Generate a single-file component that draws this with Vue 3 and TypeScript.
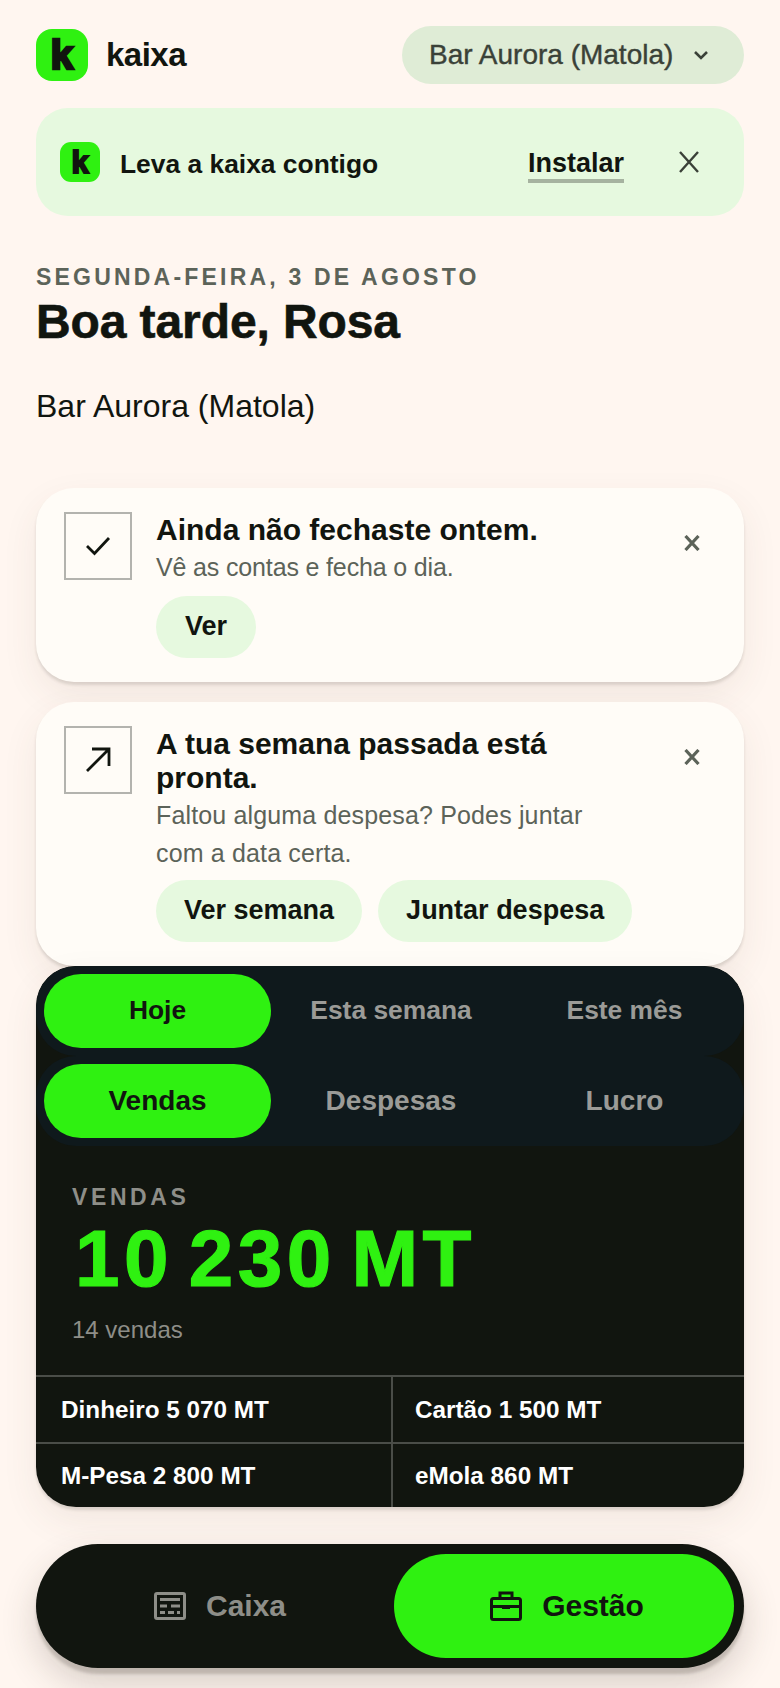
<script setup lang="ts">
interface Notice {
  icon: "check" | "arrow";
  title: string;
  text: string;
  actions: string[];
}

const notices: Notice[] = [
  {
    icon: "check",
    title: "Ainda não fechaste ontem.",
    text: "Vê as contas e fecha o dia.",
    actions: ["Ver"],
  },
  {
    icon: "arrow",
    title: "A tua semana passada está pronta.",
    text: "Faltou alguma despesa? Podes juntar com a data certa.",
    actions: ["Ver semana", "Juntar despesa"],
  },
];

const periods = ["Hoje", "Esta semana", "Este mês"];
const metrics = ["Vendas", "Despesas", "Lucro"];
const methods = ["Dinheiro 5 070 MT", "Cartão 1 500 MT", "M-Pesa 2 800 MT", "eMola 860 MT"];
</script>

<template>
  <div class="page">
    <header class="top">
      <div class="brand">
        <span class="logo">k</span>
        <span class="name">kaixa</span>
      </div>
      <button class="venue">
        Bar Aurora (Matola)
        <svg width="16" height="10" viewBox="0 0 16 10" fill="none">
          <path d="M2 2l6 6 6-6" stroke="#3a4138" stroke-width="2.6" />
        </svg>
      </button>
    </header>

    <section class="install">
      <span class="logo small">k</span>
      <strong class="install-text">Leva a kaixa contigo</strong>
      <a class="install-link">Instalar</a>
      <svg class="install-close" width="20" height="22" viewBox="0 0 20 22" fill="none">
        <path d="M1 1l18 20M19 1L1 21" stroke="#3a4138" stroke-width="2.4" />
      </svg>
    </section>

    <section class="greeting">
      <p class="date">SEGUNDA-FEIRA, 3 DE AGOSTO</p>
      <h1>Boa tarde, Rosa</h1>
      <p class="place">Bar Aurora (Matola)</p>
    </section>

    <article v-for="n in notices" :key="n.title" class="notice">
      <div class="notice-icon">
        <svg v-if="n.icon === 'check'" width="26" height="20" viewBox="0 0 26 20" fill="none">
          <path d="M2 10l7.5 7.5L24 2" stroke="#11150f" stroke-width="2.8" />
        </svg>
        <svg v-else width="26" height="26" viewBox="0 0 26 26" fill="none">
          <path d="M2 24L24 2M7 2h17v17" stroke="#11150f" stroke-width="2.8" />
        </svg>
      </div>
      <div class="notice-body">
        <h2>{{ n.title }}</h2>
        <p>{{ n.text }}</p>
        <div class="notice-actions" :class="{ single: n.actions.length === 1 }">
          <button v-for="a in n.actions" :key="a">{{ a }}</button>
        </div>
      </div>
      <svg class="notice-close" width="16" height="16" viewBox="0 0 16 16" fill="none">
        <path d="M1.5 1l13 14M14.5 1L1.5 15" stroke="#5c6359" stroke-width="3.2" />
      </svg>
    </article>

    <section class="panel">
      <div class="tabs">
        <span v-for="(p, i) in periods" :key="p" class="tab" :class="{ on: i === 0 }">{{ p }}</span>
      </div>
      <div class="tabs big">
        <span v-for="(m, i) in metrics" :key="m" class="tab" :class="{ on: i === 0 }">{{ m }}</span>
      </div>
      <div class="total">
        <p class="total-label">VENDAS</p>
        <p class="total-value">10 230 MT</p>
        <p class="total-count">14 vendas</p>
      </div>
      <div class="methods">
        <div v-for="m in methods" :key="m" class="method">{{ m }}</div>
      </div>
    </section>

    <nav class="nav">
      <a class="nav-item">
        <svg width="32" height="28" viewBox="0 0 32 28" fill="none">
          <rect x="1.5" y="1.5" width="29" height="25" rx="1.5" stroke="currentColor" stroke-width="3" />
          <path d="M6 7.5h20M6 14h7M17 14h9M6 20.5h5M14 20.5h6M23 20.5h3" stroke="currentColor" stroke-width="3" />
        </svg>
        Caixa
      </a>
      <a class="nav-item active">
        <svg width="32" height="30" viewBox="0 0 32 30" fill="none">
          <path d="M10 7V2h12v5" stroke="currentColor" stroke-width="3" />
          <rect x="1.5" y="7.5" width="29" height="21" rx="2" stroke="currentColor" stroke-width="3" />
          <path d="M2 15.5h28" stroke="currentColor" stroke-width="3" />
          <path d="M12 15h8v3h-8z" fill="currentColor" />
        </svg>
        Gestão
      </a>
    </nav>
  </div>
</template>

<style>
html,
body {
  background: #fff6f0;
}
</style>

<style scoped>
.page {
  width: 780px;
  height: 1688px;
  box-sizing: border-box;
  padding: 26px 36px 0;
  overflow: hidden;
  font-family: "Liberation Sans", Arial, sans-serif;
  color: #11150f;
  background: #fff6f0;
}
p,
h1,
h2 {
  margin: 0;
}
button {
  border: 0;
  font: inherit;
  color: inherit;
}
.top {
  display: flex;
  align-items: center;
  justify-content: space-between;
  height: 58px;
}
.brand {
  display: flex;
  align-items: center;
  gap: 18px;
}
.logo {
  display: flex;
  align-items: center;
  justify-content: center;
  width: 52px;
  height: 52px;
  border-radius: 16px;
  background: #2ff111;
  font-size: 41px;
  font-weight: 700;
  line-height: 1;
  -webkit-text-stroke: 2.6px #11150f;
}
.logo.small {
  width: 40px;
  height: 40px;
  border-radius: 11px;
  font-size: 31px;
  -webkit-text-stroke: 2px #11150f;
}
.name {
  font-size: 33px;
  font-weight: 700;
  letter-spacing: -0.5px;
}
.venue {
  display: flex;
  align-items: center;
  gap: 20px;
  width: 342px;
  height: 58px;
  padding: 0 0 0 27px;
  border-radius: 29px;
  background: #dfecd6;
  color: #3a4138;
  font-size: 28px;
  -webkit-text-stroke: 0.4px #3a4138;
}
.install {
  display: flex;
  align-items: center;
  height: 108px;
  margin-top: 24px;
  padding: 0 45px 0 24px;
  border-radius: 32px;
  background: #e6f9df;
}
.install-text {
  flex: 1;
  margin-left: 20px;
  padding-top: 4px;
  font-size: 26.4px;
}
.install-link {
  margin-right: 55px;
  padding-top: 5px;
  border-bottom: 4px solid #a6b3a0;
  font-size: 27px;
  font-weight: 700;
  line-height: 32px;
}
.greeting {
  padding-top: 48px;
}
.date {
  font-size: 23px;
  font-weight: 700;
  letter-spacing: 3.2px;
  line-height: 26px;
  color: #5c6359;
}
h1 {
  margin-top: 6px;
  font-size: 48px;
  font-weight: 700;
  line-height: 52px;
  letter-spacing: -0.1px;
  -webkit-text-stroke: 0.6px #11150f;
}
.place {
  margin-top: 40px;
  font-size: 32px;
  line-height: 36px;
}
.notice {
  display: flex;
  align-items: flex-start;
  position: relative;
  margin-top: 20px;
  padding: 24px 28px;
  border-radius: 38px;
  background: #fffcf7;
  box-shadow: 0 3px 3px rgba(60, 50, 40, 0.14), 0 14px 36px rgba(90, 70, 50, 0.08);
}
.greeting + .notice {
  margin-top: 64px;
}
.notice-icon {
  display: flex;
  flex: none;
  align-items: center;
  justify-content: center;
  box-sizing: border-box;
  width: 68px;
  height: 68px;
  border: 2px solid #b3b3ae;
}
.notice-body {
  flex: 1;
  margin-left: 24px;
  padding: 1px 110px 0 0;
}
h2 {
  font-size: 30px;
  font-weight: 700;
  line-height: 34.5px;
}
.notice-body p {
  font-size: 25px;
  line-height: 38px;
  letter-spacing: -0.15px;
  color: #5c6359;
}
.notice + .notice .notice-body p {
  letter-spacing: 0.15px;
}
.notice-actions {
  display: flex;
  gap: 16px;
  margin-top: 8px;
}
.notice-actions.single {
  margin-top: 10px;
}
.notice-actions button {
  flex: none;
  height: 62px;
  padding: 0 28px;
  border-radius: 31px;
  background: #e6f9df;
  font-size: 27px;
  font-weight: 700;
}
.notice-actions.single button {
  padding: 0 29px;
}
.notice-close {
  position: absolute;
  top: 47px;
  right: 44px;
}
.panel {
  position: relative;
  overflow: hidden;
  height: 541px;
  border-radius: 40px;
  background: #11150f;
  box-shadow: 0 3px 3px rgba(60, 50, 40, 0.14), 0 14px 36px rgba(90, 70, 50, 0.08);
}
.tabs {
  display: grid;
  grid-template-columns: repeat(3, 227px);
  gap: 6.5px;
  height: 90px;
  box-sizing: border-box;
  padding: 8px;
  border-radius: 40px;
  background: #0f191c;
  font-size: 26.4px;
}
.tabs.big {
  font-size: 28px;
}
.tab {
  display: flex;
  align-items: center;
  justify-content: center;
  border-radius: 37px;
  font-weight: 700;
  color: #9b9b97;
}
.tab.on {
  background: #2ff111;
  color: #11150f;
}
.total {
  padding: 37px 36px 0;
}
.total-label {
  font-size: 23px;
  font-weight: 700;
  letter-spacing: 3.6px;
  line-height: 28px;
  color: #8e8e88;
}
.total-value {
  margin-top: 5px;
  margin-left: 3px;
  font-size: 80px;
  font-weight: 700;
  line-height: 86px;
  letter-spacing: 4.5px;
  word-spacing: -11px;
  color: #2ff111;
  -webkit-text-stroke: 1.2px #2ff111;
}
.total-count {
  margin-top: 13px;
  font-size: 24px;
  line-height: 30px;
  color: #8e8e88;
}
.methods {
  position: absolute;
  left: 0;
  right: 0;
  bottom: 0;
  display: grid;
  grid-template-columns: 357px 1fr;
}
.method {
  box-sizing: border-box;
  height: 65px;
  padding-left: 25px;
  border-top: 2px solid #4a4d48;
  font-size: 24.3px;
  font-weight: 700;
  line-height: 63px;
  color: #fff;
}
.method:nth-child(-n + 2) {
  height: 67px;
  line-height: 65px;
}
.method:nth-child(odd) {
  border-right: 2px solid #4a4d48;
}
.method:nth-child(even) {
  padding-left: 22px;
}
.nav {
  display: grid;
  grid-template-columns: 348px 340px;
  box-sizing: border-box;
  height: 124px;
  margin-top: 37px;
  padding: 10px;
  border-radius: 62px;
  background: #11150f;
  box-shadow: 0 6px 3px rgba(60, 50, 40, 0.2), 0 16px 36px rgba(60, 50, 40, 0.2);
}
.nav-item {
  display: flex;
  align-items: center;
  justify-content: center;
  gap: 20px;
  border-radius: 52px;
  font-size: 30px;
  font-weight: 700;
  color: #8e8e88;
}
.nav-item.active {
  padding-left: 6px;
  background: #2ff111;
  color: #11150f;
}
</style>
